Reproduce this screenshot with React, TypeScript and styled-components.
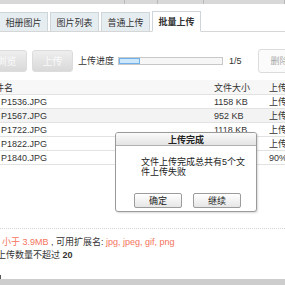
import styled, { createGlobalStyle } from 'styled-components';

const Global = createGlobalStyle`
  html, body {
    margin: 0;
    padding: 0;
    background: #fff;
  }
  body {
    font-family: "Liberation Sans", "Noto Sans CJK SC", sans-serif;
    font-size: 9px;
    color: #333;
  }
`;

type Row = { name: string; size: string; status: string; shade?: boolean };

const rows: Row[] = [
  { name: 'P1536.JPG', size: '1158 KB', status: '上传成功' },
  { name: 'P1567.JPG', size: '952 KB', status: '上传成功', shade: true },
  { name: 'P1722.JPG', size: '1118 KB', status: '上传成功' },
  { name: 'P1822.JPG', size: '1034 KB', status: '上传成功' },
  { name: 'P1840.JPG', size: '1206 KB', status: '90%' },
];

const tabs = ['相册图片', '图片列表', '普通上传', '批量上传'];

export default function App() {
  return (
    <Page>
      <Global />
      <TopStrip>
        <Segment $w={125} />
        <Segment $w={33} />
        <Segment $w={46} />
        <Segment $w={81} />
      </TopStrip>

      <TabBar>
        {tabs.map((t, i) => (
          <Tab key={t} $active={i === 3}>
            {t}
          </Tab>
        ))}
      </TabBar>

      <Toolbar>
        <GrayButton $offset={-14}>浏览</GrayButton>
        <GrayButton>上传</GrayButton>
        <Label>上传进度</Label>
        <Progress>
          <Fill style={{ width: `${(1 / 5) * 100}%` }} />
        </Progress>
        <Count>1/5</Count>
        <DeleteButton>删除</DeleteButton>
      </Toolbar>

      <Table>
        <HeadRow>
          <NameCell $indent={-14}>文件名</NameCell>
          <Cell>文件大小</Cell>
          <Cell>上传状态</Cell>
        </HeadRow>
        {rows.map(r => (
          <BodyRow key={r.name} $shade={r.shade}>
            <NameCell $indent={1}>{r.name}</NameCell>
            <Cell>{r.size}</Cell>
            <Cell>{r.status}</Cell>
          </BodyRow>
        ))}
      </Table>

      <Dialog>
        <DialogTitle>上传完成</DialogTitle>
        <DialogBody>文件上传完成总共有5个文件上传失败</DialogBody>
        <DialogActions>
          <DialogButton>确定</DialogButton>
          <DialogButton>继续</DialogButton>
        </DialogActions>
      </Dialog>

      <Divider />

      <Info>
        <InfoLine $indent={2}>
          <Warn>小于 3.9MB</Warn> , 可用扩展名: <Warn>jpg, jpeg, gif, png</Warn>
        </InfoLine>
        <InfoLine $indent={-3}>
          上传数量不超过 <b>20</b>
        </InfoLine>
      </Info>

      <Footer>
        <Mark />
        <BottomBar />
      </Footer>
    </Page>
  );
}

const Page = styled.div`
  position: relative;
  width: 285px;
  height: 285px;
  overflow: hidden;
  display: flex;
  flex-direction: column;
`;

const TopStrip = styled.div`
  display: flex;
  height: 4px;
  flex: none;
  background: #d8d8d8;
`;

const Segment = styled.div<{ $w: number }>`
  width: ${p => p.$w}px;
  flex: none;
  border-right: 1px solid #b8b8b8;
  box-sizing: border-box;
`;

const TabBar = styled.div`
  display: flex;
  flex: none;
  align-items: flex-end;
  gap: 2px;
  margin-top: 6px;
  height: 21px;
  border-bottom: 1px solid #d6d6d6;
  margin-left: -1px;
`;

const Tab = styled.div<{ $active?: boolean }>`
  box-sizing: border-box;
  flex: none;
  width: 49px;
  height: ${p => (p.$active ? 21 : 19)}px;
  margin-bottom: ${p => (p.$active ? -1 : 0)}px;
  display: flex;
  align-items: center;
  justify-content: center;
  border: 1px solid #cfd6db;
  border-bottom: ${p => (p.$active ? '1px solid #fff' : 'none')};
  background: ${p => (p.$active ? '#fff' : '#e6edf1')};
  font-weight: ${p => (p.$active ? 'bold' : 'normal')};
  color: #333;
`;

const Toolbar = styled.div`
  display: flex;
  flex: none;
  align-items: center;
  margin-top: 17px;
  height: 23px;
  white-space: nowrap;
  & > * {
    flex: none;
  }
`;

const GrayButton = styled.div<{ $offset?: number }>`
  box-sizing: border-box;
  width: 41px;
  height: 22px;
  margin-left: ${p => p.$offset ?? 0}px;
  margin-right: 5px;
  display: flex;
  align-items: center;
  justify-content: center;
  border: 1px solid #dcdcdc;
  border-radius: 3px;
  background: linear-gradient(#eeeeee, #d9d9d9);
  color: #fafafa;
  font-size: 10px;
`;

const Label = styled.span`
  color: #333;
  margin-right: 4px;
`;

const Progress = styled.div`
  box-sizing: border-box;
  width: 105px;
  height: 8px;
  border: 1px solid #c8c8c8;
  background: #f6f6f6;
  position: relative;
  overflow: hidden;
`;

const Fill = styled.div`
  height: 100%;
  box-sizing: border-box;
  background: #cfe7fb;
  border: 1px solid #6fb1e8;
`;

const Count = styled.span`
  margin-left: 6px;
  color: #333;
`;

const DeleteButton = styled.div`
  box-sizing: border-box;
  margin-left: 16px;
  width: 40px;
  height: 24px;
  display: flex;
  align-items: center;
  padding-left: 12px;
  border: 1px solid #dcdcdc;
  border-radius: 3px;
  background: #fbfbfb;
  color: #aaa;
`;

const Table = styled.div`
  margin-top: 8px;
  flex: none;
  display: flex;
  flex-direction: column;
`;

const HeadRow = styled.div`
  display: grid;
  grid-template-columns: 214px 55px 60px;
  height: 14px;
  align-items: center;
  background: #f7f7f7;
  border-bottom: 1px solid #e2e2e2;
`;

const BodyRow = styled(HeadRow)<{ $shade?: boolean }>`
  height: 13px;
  background: ${p => (p.$shade ? '#f3f3f3' : '#fff')};
`;

const Cell = styled.div`
  white-space: nowrap;
  color: #333;
`;

const NameCell = styled(Cell)<{ $indent: number }>`
  text-indent: ${p => p.$indent}px;
`;

const Dialog = styled.div`
  position: absolute;
  left: 115px;
  top: 132px;
  width: 142px;
  height: 80px;
  box-sizing: border-box;
  border: 1px solid #9a9a9a;
  border-radius: 3px;
  background: #fff;
  box-shadow: 1px 1px 2px rgba(0, 0, 0, 0.15);
  display: flex;
  flex-direction: column;
`;

const DialogTitle = styled.div`
  height: 12px;
  display: flex;
  align-items: center;
  justify-content: center;
  background: linear-gradient(#fafafa, #e4e4e4);
  border-bottom: 1px solid #b0b0b0;
  border-radius: 2px 2px 0 0;
  font-weight: bold;
  color: #222;
`;

const DialogBody = styled.div`
  margin: 11px 0 0 25px;
  width: 108px;
  line-height: 10px;
  color: #222;
`;

const DialogActions = styled.div`
  display: flex;
  gap: 11px;
  margin: auto 0 3px 18px;
`;

const DialogButton = styled.div`
  box-sizing: border-box;
  width: 48px;
  height: 15px;
  display: flex;
  align-items: center;
  justify-content: center;
  border: 1px solid #9c9c9c;
  border-radius: 2px;
  background: linear-gradient(#ffffff, #e6e6e6);
  color: #222;
`;

const Divider = styled.div`
  margin-top: 63px;
  flex: none;
  border-top: 1px dotted #d4d4d4;
`;

const Info = styled.div`
  margin-top: 7px;
  display: flex;
  flex-direction: column;
`;

const InfoLine = styled.div<{ $indent: number }>`
  height: 13px;
  line-height: 13px;
  white-space: nowrap;
  text-indent: ${p => p.$indent}px;
  color: #333;
  b {
    font-weight: bold;
  }
`;

const Warn = styled.span`
  color: #f5735c;
`;

const Footer = styled.div`
  margin-top: auto;
  display: flex;
  flex-direction: column;
`;

const Mark = styled.div`
  width: 1px;
  height: 4px;
  background: #555;
`;

const BottomBar = styled.div`
  height: 6px;
  background: #cdcdcd;
`;
